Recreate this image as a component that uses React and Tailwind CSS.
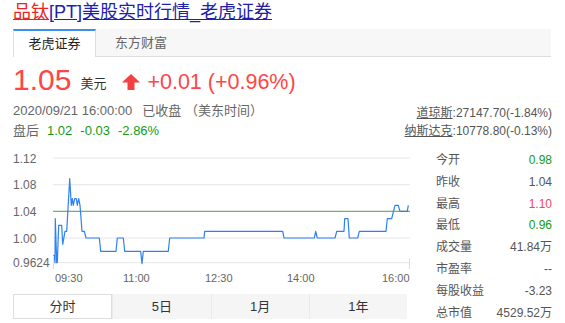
import React from "react";

const FONT = { fontFamily: '"Liberation Sans", "Noto Sans CJK SC", sans-serif' };

// raw trace points, measured on a 3x crop starting at page y=140
const RAW = [
    [160, 340], [163, 340], [165, 362], [166, 230], [170, 362], [172, 362], [176, 250], [185, 250],
    [188, 307], [195, 268], [200, 268], [209, 110], [214, 190], [217, 170], [220, 190], [224, 170],
    [229, 170], [232, 190], [236, 170], [240, 190], [246, 268], [253, 268], [258, 288], [298, 288],
    [302, 328], [348, 328], [352, 288], [370, 288], [374, 328], [422, 328], [426, 365], [430, 328],
    [505, 328], [509, 288], [612, 288], [614, 268], [848, 268], [852, 288], [943, 288], [947, 268],
    [952, 288], [1005, 288], [1010, 268], [1032, 268], [1034, 230], [1044, 230], [1048, 288],
    [1073, 288], [1078, 268], [1158, 268], [1162, 230], [1175, 230], [1185, 190], [1195, 190],
    [1200, 208], [1222, 208], [1225, 190],
];
const POINTS = RAW.map(([x, y]) => `${(x / 3 - 13).toFixed(1)},${(y / 3 - 5).toFixed(1)}`).join(" ");

const GRID = [
    { y: 11, label: "1.12" },
    { y: 37.7, label: "1.08" },
    { y: 64.3, label: "1.04" },
    { y: 91, label: "1.00" },
    { y: 115.7, label: "0.9624" },
];

const TIMES = [
    { x: 42, label: "09:30" },
    { x: 110, label: "11:00" },
    { x: 192, label: "12:30" },
    { x: 274, label: "14:00" },
    { x: 369, label: "16:00" },
];

const STATS = [
    ["今开", "0.98", "text-[#139a13]"],
    ["昨收", "1.04", "text-[#555]"],
    ["最高", "1.10", "text-[#f5475a]"],
    ["最低", "0.96", "text-[#139a13]"],
    ["成交量", "41.84万", "text-[#555]"],
    ["市盈率", "--", "text-[#555]"],
    ["每股收益", "-3.23", "text-[#555]"],
    ["总市值", "4529.52万", "text-[#555]"],
];

function Chart() {
    return (
        <svg width="400" height="142" className="block">
            {GRID.map((g) => (
                <g key={g.label}>
                    <line x1="40" x2="397" y1={g.y} y2={g.y} stroke="#e6e6e6" strokeWidth="1" />
                    <text x="0" y={g.y + 4.5} fontSize="12" fill="#666" style={FONT}>
                        {g.label}
                    </text>
                </g>
            ))}
            <line x1="40.5" x2="40.5" y1="111" y2="122" stroke="#ddd" />
            <line x1="396.5" x2="396.5" y1="111" y2="122" stroke="#ddd" />
            <line x1="40" x2="397" y1="64.3" y2="64.3" stroke="#5aa25a" strokeWidth="1" />
            <polyline points={POINTS} fill="none" stroke="#2f7ff5" strokeWidth="1.2" strokeLinejoin="round" />
            {TIMES.map((t) => (
                <text key={t.label} x={t.x} y="135" fontSize="11" fill="#666" style={FONT}>
                    {t.label}
                </text>
            ))}
        </svg>
    );
}

export default function App() {
    const periods = ["分时", "5日", "1月", "1年"];
    return (
        <div className="w-[565px] h-[323px] bg-white overflow-hidden px-[13px]" style={FONT}>
            {/* title */}
            <div className="h-[29px] pt-[1px] text-[18px] leading-[22px]">
                <span className="underline text-[#ee2222]">品钛</span>
                <span className="underline text-[#2020aa]">[PT]美股实时行情_老虎证券</span>
            </div>

            {/* source tabs */}
            <div className="flex h-[28px] w-[538px] bg-[#f7f7f7] border-b border-[#ddd] text-[13px]">
                <div className="w-[83px] h-[28px] bg-white border-t-2 border-t-[#3b8ff0] border-x border-x-[#ddd] flex items-center justify-center text-[#222]">
                    老虎证券
                </div>
                <div className="w-[90px] flex items-center justify-center text-[#666]">东方财富</div>
            </div>

            {/* price */}
            <div className="flex items-end h-[41px] pb-[2px] text-[#ff4545]">
                <span className="text-[30px] leading-[32px]">1.05</span>
                <span className="text-[13px] text-[#333] ml-[9px] mb-[3px]">美元</span>
                <svg width="18" height="16" viewBox="0 0 18 16" className="ml-[16px] mb-[6px]">
                    <polygon points="9,0 18,8.5 12.5,8.5 12.5,16 5.5,16 5.5,8.5 0,8.5" fill="#f44040" />
                </svg>
                <span className="text-[21.5px] leading-[26px] ml-[7px] mb-[1px]">+0.01 (+0.96%)</span>
            </div>

            {/* time + indices */}
            <div className="flex justify-between text-[13px] text-[#666] mt-[3px]">
                <div className="flex flex-col">
                    <div className="h-[20px] leading-[20px]">
                        2020/09/21 16:00:00<span className="ml-[10px]">已收盘 （美东时间）</span>
                    </div>
                    <div className="h-[20px] leading-[20px]">
                        盘后
                        <span className="text-[#139a13] ml-[8px]">1.02</span>
                        <span className="text-[#139a13] ml-[8px]">-0.03</span>
                        <span className="text-[#139a13] ml-[8px]">-2.86%</span>
                    </div>
                </div>
                <div className="flex flex-col items-end text-[12px] text-[#555] pt-[3px]">
                    <div className="h-[18px] leading-[18px]">
                        <span className="underline">道琼斯</span>:27147.70(-1.84%)
                    </div>
                    <div className="h-[18px] leading-[18px]">
                        <span className="underline">纳斯达克</span>:10778.80(-0.13%)
                    </div>
                </div>
            </div>

            {/* chart + stats */}
            <div className="flex justify-between mt-[6px]">
                <div className="flex flex-col">
                    <Chart />
                    <div className="flex w-[394px] h-[25px] text-[13px] text-[#333] mt-[5px]">
                        {periods.map((p, i) => (
                            <div
                                key={p}
                                className={
                                    i === 0
                                        ? "flex-1 flex items-center justify-center bg-white border border-[#ddd]"
                                        : "flex-1 flex items-center justify-center bg-[#f5f5f5] border-l border-[#eaeaea]"
                                }
                            >
                                {p}
                            </div>
                        ))}
                    </div>
                </div>
                <div className="w-[116px] flex flex-col text-[12px] pt-[3px]">
                    {STATS.map(([k, v, c]) => (
                        <div key={k} className="flex justify-between h-[21.8px] leading-[21.8px]">
                            <span className="text-[#555]">{k}</span>
                            <span className={c}>{v}</span>
                        </div>
                    ))}
                </div>
            </div>
        </div>
    );
}
